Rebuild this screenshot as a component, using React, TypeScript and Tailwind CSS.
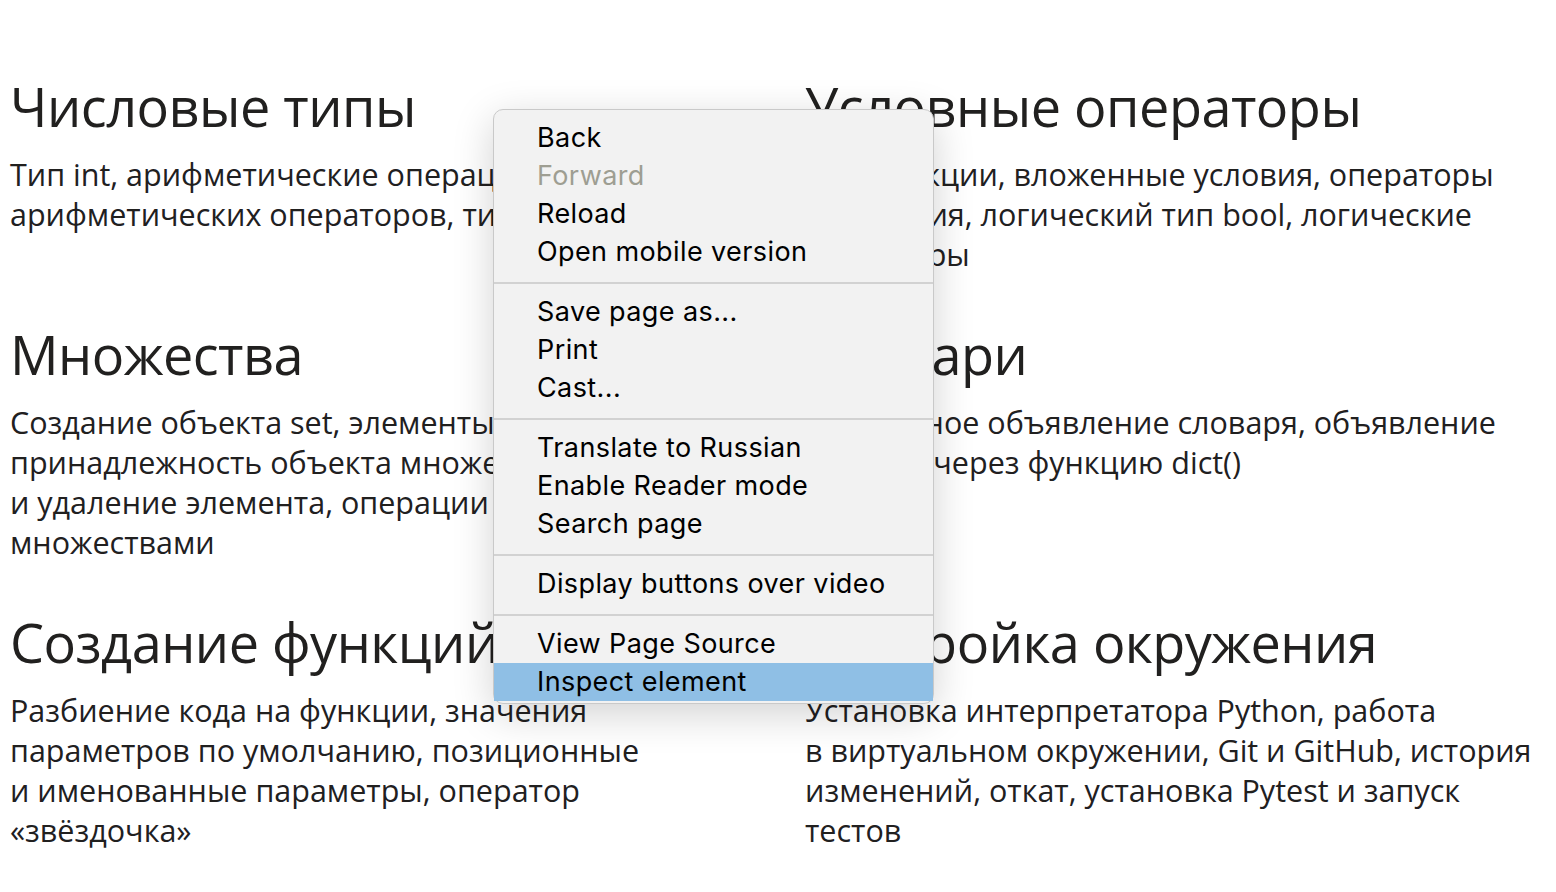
const topics = [
  {
    title: 'Числовые типы',
    lines: ['Тип int, арифметические операции, приоритет', 'арифметических операторов, тип float'],
  },
  {
    title: 'Условные операторы',
    lines: ['Конструкции, вложенные условия, операторы', 'сравнения, логический тип bool, логические', 'операторы'],
  },
  {
    title: 'Множества',
    lines: [
      'Создание объекта set, элементы множества,',
      'принадлежность объекта множеству, добавление',
      'и удаление элемента, операции над',
      'множествами',
    ],
  },
  {
    title: 'Словари',
    lines: ['Буквальное объявление словаря, объявление', 'словаря через функцию dict()'],
  },
  {
    title: 'Создание функций',
    lines: [
      'Разбиение кода на функции, значения',
      'параметров по умолчанию, позиционные',
      'и именованные параметры, оператор',
      '«звёздочка»',
    ],
  },
  {
    title: 'Настройка окружения',
    lines: [
      'Установка интерпретатора Python, работа',
      'в виртуальном окружении, Git и GitHub, история',
      'изменений, откат, установка Pytest и запуск',
      'тестов',
    ],
  },
]

const menu: { label: string; disabled?: boolean; active?: boolean }[][] = [
  [{ label: 'Back' }, { label: 'Forward', disabled: true }, { label: 'Reload' }, { label: 'Open mobile version' }],
  [{ label: 'Save page as...' }, { label: 'Print' }, { label: 'Cast...' }],
  [{ label: 'Translate to Russian' }, { label: 'Enable Reader mode' }, { label: 'Search page' }],
  [{ label: 'Display buttons over video' }],
  [{ label: 'View Page Source' }, { label: 'Inspect element', active: true }],
]

function ContextMenu() {
  return (
    <div className="absolute left-[493px] top-[109px] w-[441px] rounded-[10px] border border-[#c9c9c9] bg-[#f2f2f2] pt-[9px] pb-[2px] shadow-[0_10px_40px_rgba(0,0,0,0.18)] font-['Inter',sans-serif] text-[27px] tracking-[0.4px] text-black">
      {menu.map((group, gi) => (
        <div key={gi}>
          {gi > 0 && <div className="mt-[11px] mb-[9px] h-[2px] bg-[#d2d2d2]" />}
          {group.map((item) => (
            <div
              key={item.label}
              className={
                'h-[38px] pl-[43px] leading-[38px] ' +
                (item.disabled ? 'text-[#9e9e92] ' : '') +
                (item.active ? 'bg-[#8fbfe5]' : '')
              }
            >
              {item.label}
            </div>
          ))}
        </div>
      ))}
    </div>
  )
}

export default function App() {
  return (
    <div className="relative min-h-[892px] w-full bg-white font-['Open_Sans',sans-serif] text-[#21201f]">
      <div className="grid grid-cols-[795px_1fr] gap-y-[48px] pl-[10px] pt-[74px]">
        {topics.map((t) => (
          <div key={t.title}>
            <h2 className="mb-[16px] whitespace-nowrap text-[54px] leading-[64px] tracking-[-0.5px]">{t.title}</h2>
            <p className="whitespace-nowrap text-[30.5px] leading-[40px]">
              {t.lines.map((l, i) => (
                <span key={i}>
                  {l}
                  {i < t.lines.length - 1 && <br />}
                </span>
              ))}
            </p>
          </div>
        ))}
      </div>
      <ContextMenu />
    </div>
  )
}
